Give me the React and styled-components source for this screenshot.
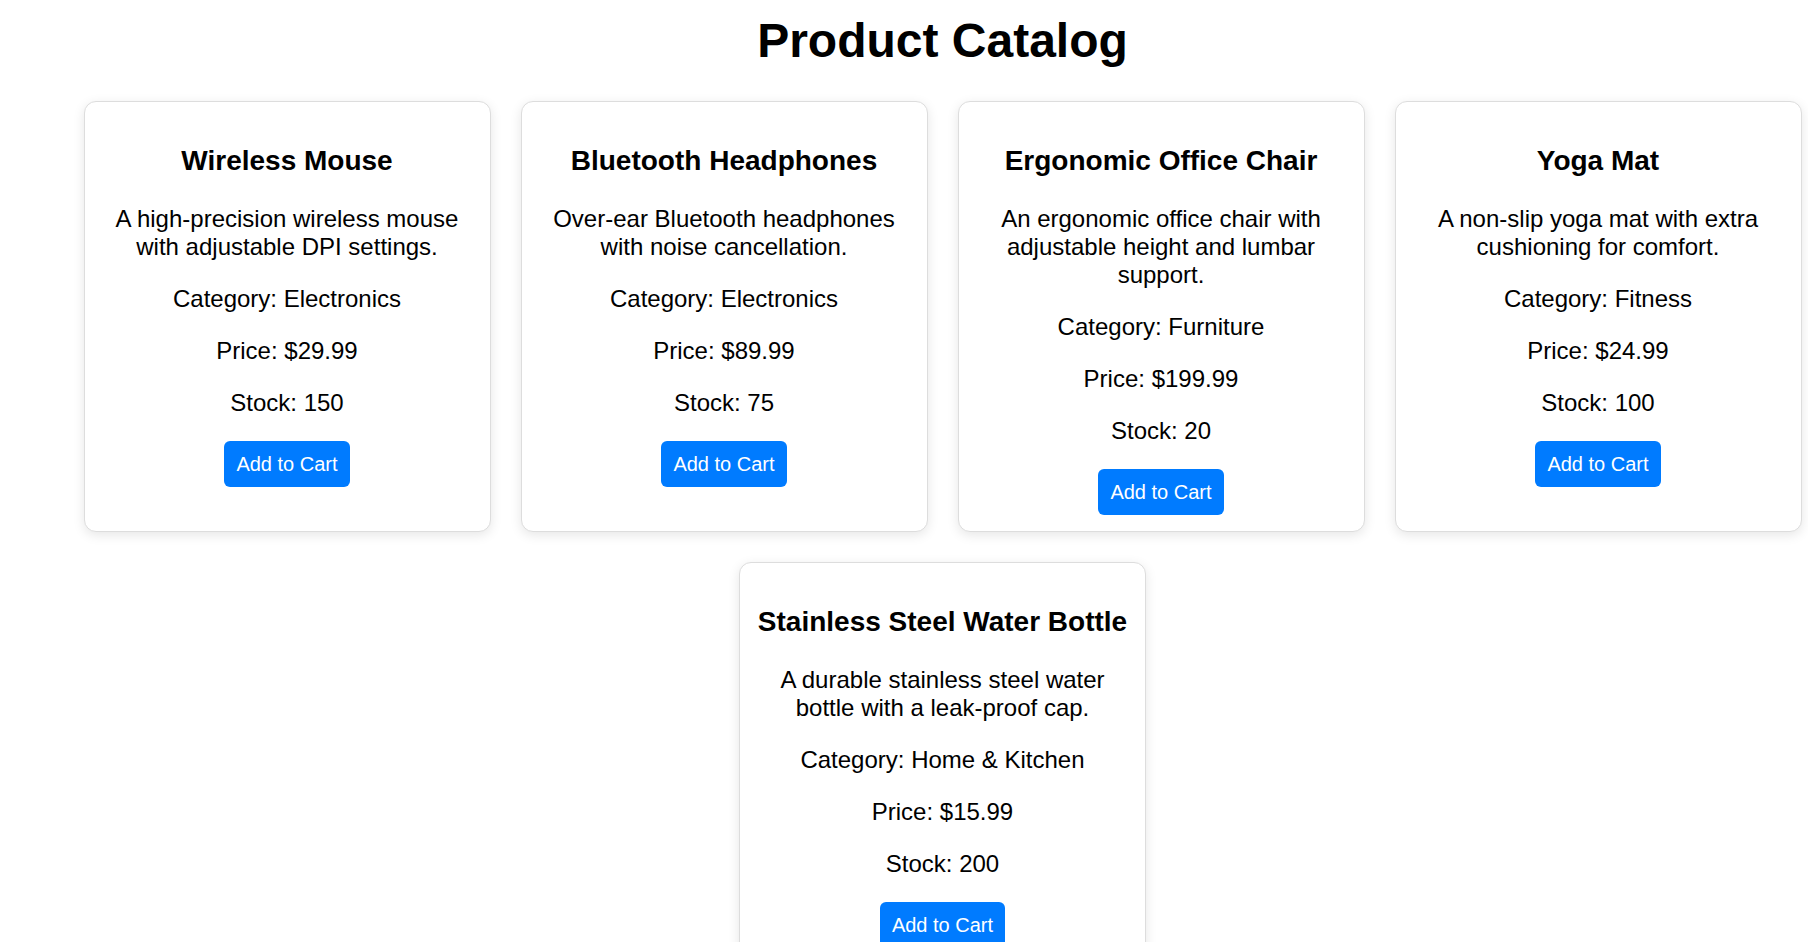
import React from "react";
import styled, { createGlobalStyle } from "styled-components";

const GlobalStyle = createGlobalStyle`
  html, body {
    margin: 0;
    padding: 0;
    background: #ffffff;
    overflow: hidden;
  }
  body {
    font-family: "Liberation Sans", Arial, sans-serif;
    font-size: 24px;
    color: #000;
  }
`;

const Page = styled.div`
  margin-left: 77px;
  width: 1731px;
  text-align: center;
`;

const Title = styled.h1`
  font-size: 48px;
  font-weight: bold;
  margin: 13px 0 33px;
  line-height: normal;
`;

const Grid = styled.div`
  display: flex;
  flex-wrap: wrap;
  justify-content: center;
  column-gap: 30px;
  row-gap: 30px;
`;

const Card = styled.div`
  box-sizing: border-box;
  width: 407px;
  padding: 15px 15px 16px;
  border: 1px solid #dddddd;
  border-radius: 12px;
  background: #fff;
  box-shadow: 0 3px 12px rgba(0, 0, 0, 0.1);
  text-align: center;
`;

const Name = styled.h3`
  font-size: 28px;
  font-weight: bold;
  margin: 28px 0;
  line-height: normal;
`;

const Text = styled.p`
  margin: 24px 0;
  font-size: 24px;
  line-height: normal;
`;

const Actions = styled.div`
  padding-top: 0;
`;

const Button = styled.button`
  font-family: "Liberation Sans", Arial, sans-serif;
  font-size: 20px;
  line-height: 23px;
  padding: 11.5px 12px;
  background: #007bff;
  color: #fff;
  border: none;
  border-radius: 6px;
  cursor: pointer;
`;

const products = [
  {
    name: "Wireless Mouse",
    description: "A high-precision wireless mouse with adjustable DPI settings.",
    category: "Electronics",
    price: "29.99",
    stock: 150,
  },
  {
    name: "Bluetooth Headphones",
    description: "Over-ear Bluetooth headphones with noise cancellation.",
    category: "Electronics",
    price: "89.99",
    stock: 75,
  },
  {
    name: "Ergonomic Office Chair",
    description:
      "An ergonomic office chair with adjustable height and lumbar support.",
    category: "Furniture",
    price: "199.99",
    stock: 20,
  },
  {
    name: "Yoga Mat",
    description: "A non-slip yoga mat with extra cushioning for comfort.",
    category: "Fitness",
    price: "24.99",
    stock: 100,
  },
  {
    name: "Stainless Steel Water Bottle",
    description: "A durable stainless steel water bottle with a leak-proof cap.",
    category: "Home & Kitchen",
    price: "15.99",
    stock: 200,
  },
];

export default function App() {
  return (
    <>
      <GlobalStyle />
      <Page>
        <Title>Product Catalog</Title>
        <Grid>
          {products.map((p) => (
            <Card key={p.name}>
              <Name>{p.name}</Name>
              <Text>{p.description}</Text>
              <Text>Category: {p.category}</Text>
              <Text>Price: ${p.price}</Text>
              <Text>Stock: {p.stock}</Text>
              <Actions>
                <Button>Add to Cart</Button>
              </Actions>
            </Card>
          ))}
        </Grid>
      </Page>
    </>
  );
}
